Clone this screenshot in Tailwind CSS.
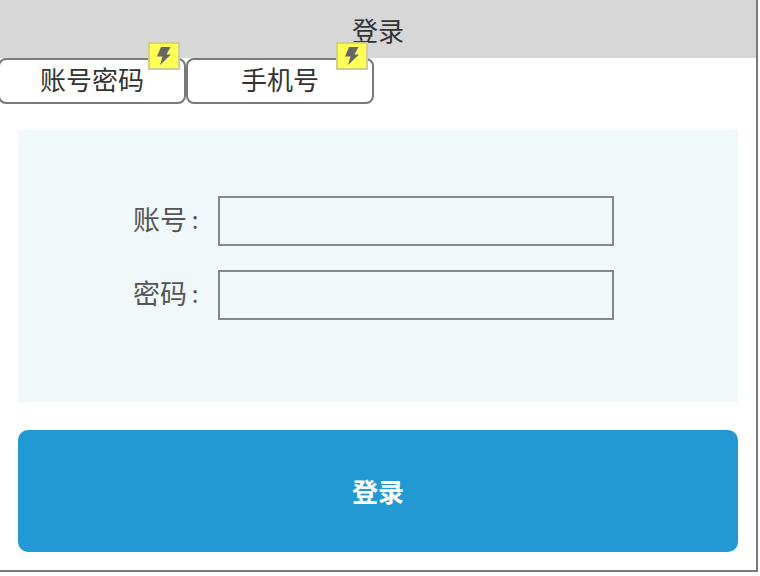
<!DOCTYPE html>
<html lang="zh-CN">
<head>
    <meta charset="UTF-8">
    <title>登录</title>
    <script src="https://cdn.jsdelivr.net/npm/@tailwindcss/browser@4"></script>
</head>
<body class="bg-white font-['Noto_Sans_CJK_SC','Noto_Sans',sans-serif]">
    <div class="w-[758px] h-[572px] border-r-2 border-b-2 border-[#797979] flex flex-col overflow-hidden">
        <header class="h-[58px] shrink-0 -mr-[2px] pr-[2px] bg-[#d7d7d7] flex items-center justify-center text-[26px] text-[#333]">登录</header>

        <div class="flex h-[46px] shrink-0 -ml-[2px]">
            <button class="relative w-[188px] h-full pb-1 border-2 border-[#797979] rounded-lg bg-white text-[26px] leading-none text-[#333]">
                账号密码
                <span class="absolute right-[4px] -top-[18px] w-[32px] h-[28px] bg-[#ffff55] border-2 border-[#cfcf8f] flex items-center justify-center">
                    <svg class="w-[14px] h-[18px]" viewBox="0 0 14 18"><path d="M4 0h9.5L9.5 7.5H14L3 18 5.5 9.5H0z" fill="#666"/></svg>
                </span>
            </button>
            <button class="relative w-[188px] h-full pb-1 border-2 border-[#797979] rounded-lg bg-white text-[26px] leading-none text-[#333]">
                手机号
                <span class="absolute right-[4px] -top-[18px] w-[32px] h-[28px] bg-[#ffff55] border-2 border-[#cfcf8f] flex items-center justify-center">
                    <svg class="w-[14px] h-[18px]" viewBox="0 0 14 18"><path d="M4 0h9.5L9.5 7.5H14L3 18 5.5 9.5H0z" fill="#666"/></svg>
                </span>
            </button>
        </div>

        <main class="px-[18px] pt-[26px]">
            <form class="h-[272px] bg-[#f0f8fa] pt-[66px] flex flex-col gap-[24px]">
                <div class="flex items-center h-[50px]">
                    <label class="w-[200px] pb-[4px] pr-[15px] flex justify-end items-center text-[27px] text-[#555]">账号<span class="w-[16px] text-center text-[24px] leading-none">:</span></label>
                    <input type="text" class="w-[396px] h-[50px] border-2 border-[#7f8c8d]">
                </div>
                <div class="flex items-center h-[50px]">
                    <label class="w-[200px] pb-[4px] pr-[15px] flex justify-end items-center text-[27px] text-[#555]">密码<span class="w-[16px] text-center text-[24px] leading-none">:</span></label>
                    <input type="password" class="w-[396px] h-[50px] border-2 border-[#7f8c8d]">
                </div>
            </form>
            <button class="w-full h-[122px] mt-[28px] pb-[2px] bg-[#2399d3] rounded-[10px] text-white text-[26px] font-bold">登录</button>
        </main>
    </div>
</body>
</html>
